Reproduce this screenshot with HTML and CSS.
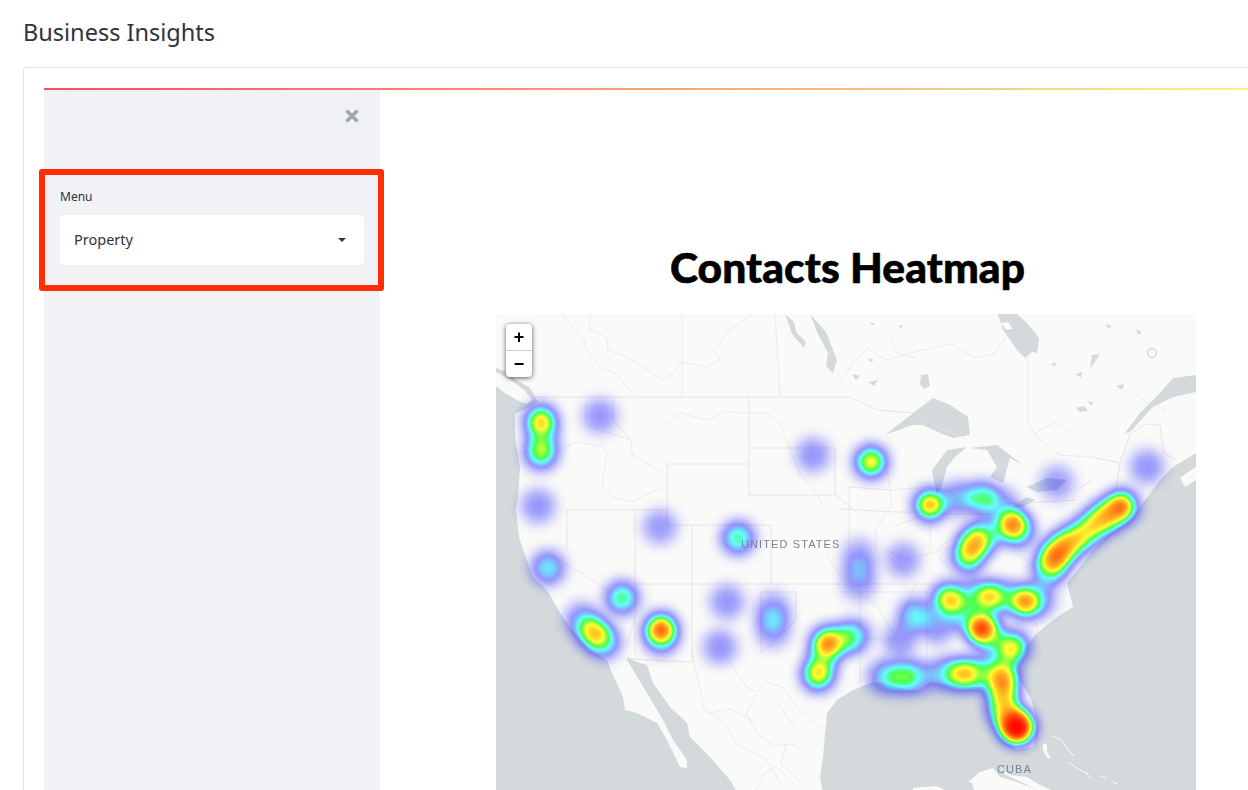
FILE: index.html
```html
<!DOCTYPE html>
<html lang="en">
<head>
  <meta charset="UTF-8" />
  <meta name="viewport" content="width=device-width, initial-scale=1.0" />
  <title>Business Insights</title>
  <link rel="stylesheet" href="styles.css">
</head>
<body>

  <h1 class="page-title">Business Insights</h1>

  <div class="frame">
    <div class="rainbow"></div>
    <div class="app">

      <!-- Sidebar -->
      <aside class="sidebar">
        <button class="close-btn" aria-label="Close">
          <svg viewBox="0 0 14 14" width="14" height="14"><path d="M1.5 1.5 L12.5 12.5 M12.5 1.5 L1.5 12.5" stroke="#a3a8b4" stroke-width="3.6" fill="none"/></svg>
        </button>
        <div class="menu-box">
          <label class="menu-label">Menu</label>
          <div class="select">
            <span>Property</span>
            <i class="caret"></i>
          </div>
        </div>
      </aside>

      <!-- Main -->
      <main class="content">
        <h2 class="map-title">Contacts Heatmap</h2>
        <div class="map">
          <svg class="map-base" viewBox="0 0 700 476" width="700" height="476">
            <!-- Land -->
            <path class="land" d="M0 54 L13 59 L20 66 L33 73 L37 79 L42 88 L36 92 L27 96 L19 100 L19 123 L24 153 L22 183 L20 196 L23 223 L27 236 L37 263 L51 276 L64 299 L74 313 L94 336 L111 346 L117 361 L127 383 L129 396 L141 399 L161 409 L171 426 L184 453 L191 454 L191 446 L177 426 L167 406 L151 379 L131 346 L131 343 L141 348 L151 351 L157 369 L174 393 L191 409 L194 423 L214 443 L234 466 L242 480 L327 480 L324 463 L327 443 L329 419 L331 399 L341 386 L344 384 L357 376 L377 368 L387 369 L411 376 L424 376 L434 368 L477 373 L491 373 L501 409 L511 426 L521 436 L537 433 L542 409 L534 383 L524 366 L517 349 L541 319 L561 303 L577 293 L571 269 L584 253 L597 236 L611 222 L637 203 L644 193 L664 166 L677 153 L700 139 L700 78 L677 83 L657 93 L634 118 L629 119 L644 99 L664 79 L677 64 L700 61 L700 0 L0 0 Z"/>
            <path class="land" d="M0 58 L12 64 L28 76 L36 86 L30 90 L25 88 L10 80 L0 72 Z"/>
            <path class="land" d="M700 153 L691 159 L684 164 L689 173 L700 166 Z"/>
            <!-- Cuba, Bahamas -->
            <path class="land" d="M472 468 L484 458 L497 454 L504 463 L521 468 L541 476 L478 476 L476 469 Z"/>
            <path class="land" d="M504 454 L514 461 L531 463 L544 471 L556 476 L541 476 L521 466 L510 461 Z"/>
            <path class="land" d="M417 474 L440 472 L449 476 L417 476 Z"/>
            <path class="land" d="M547 429 L551 431 L551 438 L555 444 L551 444 L547 436 Z"/>
            <path class="land" d="M491 471 L496 472 L496 476 L492 476 Z"/>
            <path class="reef" d="M556 422 L566 426 L572 436 L578 442 M572 448 L584 456 L592 460 M590 458 L594 464 M604 462 L610 464 M616 468 L622 470"/>
            <!-- Lakes -->
            <path class="water" d="M502 0 L507 16 L521 36 L529 44 L536 38 L541 39 L543 24 L531 9 L521 0 Z"/>
            <path class="land" d="M505 9 L512 8 L517 15 L510 16 Z"/>
            <path class="water" d="M389 121 L421 96 L437 84 L454 91 L472 103 L474 121 L457 124 L444 119 L427 111 L416 111 Z"/>
            <path class="water" d="M436 156 L451 136 L471 133 L459 143 L451 153 L446 172 L441 180 L438 168 Z"/>
            <path class="water" d="M474 134 L501 131 L527 151 L514 144 L507 169 L494 163 L501 153 L491 136 Z"/>
            <path class="water" d="M531 173 L551 164 L571 166 L561 176 L541 178 Z"/>
            <path class="water" d="M517 193 L531 183 L539 186 L527 193 Z"/>
            <path class="water" d="M314 0 L330 18 L341 46 L337 59 L330 52 L332 39 L322 20 Z"/>
            <path class="water" d="M289 0 L298 8 L300 18 L310 28 L308 34 L296 20 L292 8 Z"/>
            <path class="water" d="M425 61 L432 60 L434 72 L428 75 L424 70 Z"/>
            <path class="water" d="M591 87 L597 88 L596 92 Z"/>
            <path class="water" d="M596 41 L604 40 L596 52 L594 54 Z"/>
            <path class="water" d="M580 94 L588 92 L592 97 L584 98 Z"/>
            <path class="water" d="M374 8 L380 10 L376 11 Z M402 12 L408 11 L405 14 Z M372 44 L378 46 L374 48 Z M356 60 L364 62 L360 66 Z M372 68 L382 66 L378 72 Z"/>
            <path class="water" d="M555 50 L560 48 L559 53 Z M580 60 L586 58 L585 64 Z M610 10 L616 12 L612 15 Z M640 15 L646 18 L642 21 Z M620 72 L628 70 L626 76 Z"/>
            <circle class="ring" cx="656" cy="39" r="4.5"/>
            <!-- Province and river lines -->
            <path class="line" d="M186 0 V83 M279 0 L284 83 M66 0 L88 26 L90 36 L104 53 L121 61 L137 81 M94 0 L94 16 L111 24 L112 36 L131 43 L167 66 L177 59 L186 48 L211 53 L224 46 L217 36 L234 16 L257 0"/>
            <path class="line" d="M532 39 V109 L541 124 L564 141 L594 143 L605 132 M344 68 L358 48 L372 34 L390 46 L420 38 L455 30 L478 44 L498 40 L510 24 M538 120 L560 108 L574 118 M640 80 L650 88 L670 96 M395 26 L402 40 L420 44"/>
            <path class="line" d="M164 116 L184 99 L211 106 L228 98 L254 99 L271 99 L284 109 L294 136 L304 160 L318 176 L326 190 M106 130 L111 140 L106 170 L117 183 L137 188 L167 173 M27 138 L60 139 L81 128 L106 133 M90 90 V110 L104 116 L135 126 L136 140 L165 158"/>
            <path class="line" d="M48 236 L112 276 L139 304 L131 331 M224 336 L251 373 L261 378 L271 368 L287 373 L301 393 L327 416"/>
            <path class="line" d="M195 335 L203 370 L208 395 L230 410 L240 430 L270 445 L285 470 M260 380 L250 400 L262 420 L278 432 L298 430 L314 445 M282 390 L300 415 M210 400 L235 395 L262 410 M260 476 L268 460 L280 452 L298 470 M290 430 L285 450 L305 470"/>
            <path class="line" d="M387 236 L420 269 L400 319 L377 368 M364 236 V369 M431 278 V368 M344 325 H399 M436 236 L460 260 M390 236 L410 245 L432 240 L470 230 M330 240 L350 270 L380 290 L395 315 M470 236 L480 270 L500 285 M344 278 H432 M500 272 L520 280 L530 296 L540 310 L545 330 M553 284 L560 270 L573 260 M524 240 L545 260 L560 270"/>
            <path class="line" d="M440 236 L485 204 M434 180 V236 M400 212 L430 200 M390 150 L396 190 L380 215 L380 236 M353 173 L395 176 L434 173 M353 173 V236"/>
            <!-- State and border lines -->
            <path class="border" d="M37 83 H354 L364 88 L382 96 L417 99 L440 112 L470 125 M595 143 L624 149 L634 120 L650 110 L664 111 L668 140 L680 145 M624 150 L620 175 L606 188"/>
            <path class="border" d="M253 83 V182 M253 134 H339 M253 181 H339 M117 83 V106 L134 126 M70 196 H171 M171 196 V211 H275 M171 150 H253 M171 150 V211 M71 196 V236 M139 196 V341 M196 211 V348 M275 211 V270 M139 270 H344 M265 278 V339 M265 278 H300 L300 306 L265 339"/>
            <path class="border" d="M339 134 V180 L360 198 M344 195 L400 198 L438 198 M430 200 H520 M510 190 L580 186 M580 176 L596 166 M135 345 L196 348 M340 270 H440"/>
          </svg>
          <canvas id="heat" class="map-heat" width="700" height="476"></canvas>
          <span class="map-label label-us">UNITED STATES</span>
          <span class="map-label label-cuba">CUBA</span>
          <div class="zoom-ctrl">
            <a class="zoom-btn">+</a>
            <a class="zoom-btn">&minus;</a>
          </div>
        </div>
      </main>

    </div>
  </div>

  <script src="heat.js"></script>
</body>
</html>
```

FILE: styles.css
```css
/* Global Styles */
html, body {
  height: 790px;
  overflow: hidden;
}

body {
  font-family: 'Noto Sans', 'Open Sans', sans-serif;
  margin: 0;
  padding: 0 0 0 23px;
  background-color: #fff;
  color: #31333f;
}

.page-title {
  margin: 0;
  padding-top: 16px;
  height: 67px;
  box-sizing: border-box;
  font-size: 23.5px;
  line-height: 32px;
  font-weight: 400;
}

/* Frame */
.frame {
  height: 723px;
  box-sizing: border-box;
  padding: 20px 0 0 20px;
  border: 1px solid #e3e3e3;
  border-right: none;
  border-bottom: none;
  border-radius: 4px 0 0 0;
}

.rainbow {
  height: 2px;
  background-image: linear-gradient(90deg, #f4525a, #fdf08f);
}

.app {
  display: flex;
}

/* Sidebar */
.sidebar {
  width: 336px;
  height: 700px;
  flex-shrink: 0;
  background-color: #f0f2f6;
  display: flex;
  flex-direction: column;
}

.close-btn {
  align-self: flex-end;
  margin: 19px 21px 0 0;
  padding: 0;
  width: 14px;
  height: 14px;
  border: none;
  background: none;
  line-height: 0;
}

.menu-box {
  margin: 46px 0 0 -5px;
  width: 345px;
  height: 122px;
  box-sizing: border-box;
  padding: 14px 14px 0 15px;
  border: 6.5px solid #ff2d00;
  border-radius: 3px;
}

.menu-label {
  display: block;
  font-size: 12px;
  line-height: 16px;
  margin-bottom: 10px;
}

.select {
  height: 50px;
  box-sizing: border-box;
  padding: 0 18px 2px 14px;
  background-color: #fff;
  border-radius: 4px;
  display: flex;
  align-items: center;
  justify-content: space-between;
  font-size: 14.5px;
}

.caret {
  border-left: 4px solid transparent;
  border-right: 4px solid transparent;
  border-top: 4px solid #31333f;
  margin-top: 2px;
}

/* Main */
.content {
  flex: 1;
  padding-left: 64px;
  display: flex;
  flex-direction: column;
  align-items: center;
}

.map-title {
  margin: 148px 0 0;
  padding-left: 3px;
  height: 76px;
  font-family: 'Lato', 'Noto Sans', sans-serif;
  font-size: 42.5px;
  line-height: 58px;
  font-weight: 900;
  letter-spacing: 0.1px;
  color: #000;
  -webkit-text-stroke: 0.6px #000;
}

/* Map */
.map {
  position: relative;
  width: 700px;
  height: 476px;
  overflow: hidden;
  background-color: #d4dadc;
}

.map-base {
  display: block;
  filter: blur(0.4px);
}

.map-heat {
  position: absolute;
  left: 0;
  top: 0;
}

.land {
  fill: #fafaf9;
}

.water {
  fill: #d4dadc;
}

.ring {
  fill: none;
  stroke: #d4dadc;
  stroke-width: 1.5;
}

.reef {
  fill: none;
  stroke: #fafaf9;
  stroke-width: 1;
}

.line {
  fill: none;
  stroke: #e4e4e4;
  stroke-width: 0.7;
}

.border {
  fill: none;
  stroke: #ecdfdf;
  stroke-width: 0.9;
}

.map-label {
  position: absolute;
  font-family: 'Liberation Sans', sans-serif;
  font-size: 11px;
  line-height: 12px;
  letter-spacing: 1.1px;
  color: #7a8394;
}

.label-us {
  left: 245px;
  top: 224px;
}

.label-cuba {
  left: 501px;
  top: 449px;
}

.zoom-ctrl {
  position: absolute;
  left: 10px;
  top: 10px;
  width: 26px;
  border-radius: 4px;
  background-color: #fff;
  box-shadow: 0 1px 5px rgba(0, 0, 0, 0.65);
}

.zoom-btn {
  display: block;
  height: 26px;
  font: bold 18px/26px 'Liberation Sans', sans-serif;
  text-align: center;
  color: #000;
}

.zoom-btn:first-child {
  border-bottom: 1px solid #ccc;
}
```

FILE: heat.js
```js
// Heat points in map pixels: x, y, weight
const points = [
  // Pacific northwest
  [45, 107, 0.82], [45, 139, 0.72], [47, 123, 0.34],
  [104, 102, 0.4], [42, 192, 0.4], [52, 254, 0.58],
  // Mountain west
  [164, 213, 0.38], [242, 224, 0.66], [317, 141, 0.4], [375, 148, 0.82],
  // Great lakes
  [434, 191, 0.87], [486, 184, 0.64], [462, 184, 0.46], [505, 190, 0.38],
  [516, 210, 0.85], [523, 218, 0.5], [478, 228, 0.72], [472, 243, 0.72], [490, 222, 0.55],
  // North east corridor
  [626, 192, 0.88], [615, 200, 0.6], [604, 206, 0.7], [590, 218, 0.7], [575, 228, 0.7],
  [564, 236, 0.7], [557, 246, 0.76], [552, 258, 0.5], [651, 153, 0.4], [561, 169, 0.36],
  // South west
  [126, 284, 0.68], [86, 306, 0.45], [97, 318, 0.74], [108, 328, 0.6],
  [165, 315, 0.9], [165, 325, 0.45], [231, 288, 0.4], [224, 333, 0.4],
  [277, 294, 0.3], [277, 306, 0.32], [277, 318, 0.3],
  // Texas
  [331, 329, 0.86], [322, 361, 0.8], [327, 345, 0.42], [358, 322, 0.55], [346, 326, 0.4],
  // South
  [363, 241, 0.3], [363, 256, 0.3], [363, 271, 0.3], [407, 246, 0.38],
  [419, 301, 0.58], [441, 313, 0.4], [404, 326, 0.4],
  [388, 363, 0.5], [406, 363, 0.58], [422, 363, 0.46],
  [449, 360, 0.5], [467, 360, 0.78], [484, 360, 0.58],
  // South east
  [452, 285, 0.82], [494, 283, 0.8], [529, 288, 0.85], [543, 286, 0.42],
  [475, 282, 0.45], [512, 283, 0.4], [465, 300, 0.45],
  [485, 314, 0.93], [492, 320, 0.55], [517, 333, 0.78], [505, 345, 0.42],
  [507, 364, 0.82], [507, 380, 0.7], [507, 396, 0.58], [512, 405, 0.42],
  [521, 414, 1], [521, 412, 0.8]
];

const RADIUS = 17;
const BLUR = 14;

function makeStamp() {
  const size = (RADIUS + BLUR) * 2;
  const stamp = document.createElement("canvas");
  stamp.width = stamp.height = size;
  const ctx = stamp.getContext("2d");
  ctx.shadowOffsetX = ctx.shadowOffsetY = size * 2;
  ctx.shadowBlur = BLUR;
  ctx.shadowColor = "#000";
  ctx.beginPath();
  ctx.arc(size / 2 - size * 2, size / 2 - size * 2, RADIUS, 0, Math.PI * 2);
  ctx.fill();
  return stamp;
}

function makePalette() {
  const c = document.createElement("canvas");
  c.width = 1;
  c.height = 256;
  const ctx = c.getContext("2d");
  const grad = ctx.createLinearGradient(0, 0, 0, 256);
  grad.addColorStop(0.4, "blue");
  grad.addColorStop(0.6, "cyan");
  grad.addColorStop(0.7, "lime");
  grad.addColorStop(0.8, "yellow");
  grad.addColorStop(1.0, "red");
  ctx.fillStyle = grad;
  ctx.fillRect(0, 0, 1, 256);
  return ctx.getImageData(0, 0, 1, 256).data;
}

function draw() {
  const canvas = document.getElementById("heat");
  const ctx = canvas.getContext("2d");
  const stamp = makeStamp();
  const half = stamp.width / 2;

  points.forEach(function (p) {
    ctx.globalAlpha = p[2];
    ctx.drawImage(stamp, p[0] - half, p[1] - half);
  });

  // Colour the alpha channel through the palette
  const palette = makePalette();
  const img = ctx.getImageData(0, 0, canvas.width, canvas.height);
  const px = img.data;
  for (let i = 0; i < px.length; i += 4) {
    const j = px[i + 3] * 4;
    if (j) {
      px[i] = palette[j];
      px[i + 1] = palette[j + 1];
      px[i + 2] = palette[j + 2];
    }
  }
  ctx.putImageData(img, 0, 0);
}

draw();
```
